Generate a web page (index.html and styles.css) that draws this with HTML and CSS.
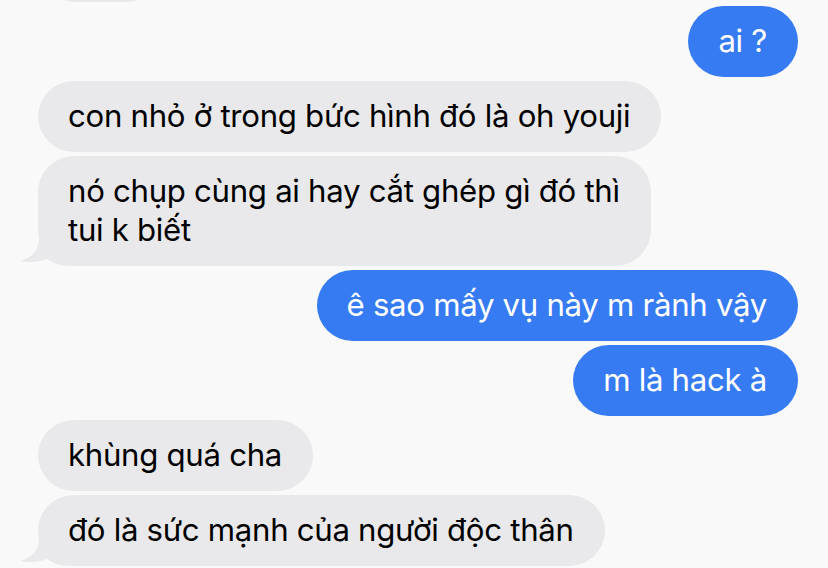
FILE: index.html
```html
<!DOCTYPE html>
<html lang="vi">
<head>
  <meta charset="UTF-8">
  <meta name="viewport" content="width=device-width, initial-scale=1.0">
  <title>Tin nhắn</title>
  <link rel="stylesheet" href="styles.css">
</head>
<body>
  <div class="thread">
    <div class="bubble in cut"></div>
    <div class="bubble out">ai ?</div>
    <div class="bubble in">con nhỏ ở trong bức hình đó là oh youji</div>
    <div class="bubble in tail">nó chụp cùng ai hay cắt ghép gì đó thì<br>tui k biết
      <svg class="tail-shape" width="50" height="34" viewBox="0 0 50 34"><path d="M20 0 L20 6 C20 18 13 26 1 29 C10 31 20 30 28 27 C34 31 41 34 50 34 L50 0 Z"/></svg>
    </div>
    <div class="bubble out">ê sao mấy vụ này m rành vậy</div>
    <div class="bubble out">m là hack à</div>
    <div class="bubble in">khùng quá cha</div>
    <div class="bubble in tail">đó là sức mạnh của người độc thân
      <svg class="tail-shape" width="50" height="34" viewBox="0 0 50 34"><path d="M20 0 L20 6 C20 18 13 26 1 29 C10 31 20 30 28 27 C34 31 41 34 50 34 L50 0 Z"/></svg>
    </div>
  </div>
</body>
</html>
```
FILE: styles.css
```css
html, body {
  margin: 0;
  padding: 0;
  background: #f9f9f9;
  overflow: hidden;
}

body {
  font-family: 'Inter', 'Noto Sans', sans-serif;
  font-size: 31.2px;
  letter-spacing: -0.3px;
}

.thread {
  display: flex;
  flex-direction: column;
  gap: 4px;
  padding: 0 30px 0 38px;
}

.bubble {
  position: relative;
  padding: 16px 31px 16px 30px;
  line-height: 39px;
  border-radius: 36px;
  white-space: nowrap;
}

.bubble.in {
  align-self: flex-start;
  background: #e9e9eb;
  color: #000;
}

.bubble.out {
  align-self: flex-end;
  background: #367bf2;
  color: #fff;
}

.bubble.cut {
  height: 39px;
  width: 61px;
  margin-top: -69px;
  margin-left: 2px;
}

.tail-shape {
  position: absolute;
  left: -19px;
  bottom: 0;
  fill: #e9e9eb;
}
```
